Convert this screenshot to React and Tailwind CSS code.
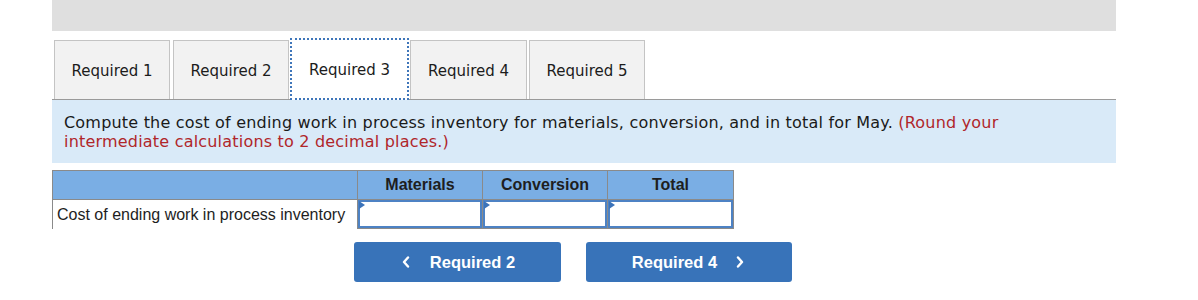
import React from 'react';

const tabs = [
  { label: 'Required 1', cls: 'w-[116px]' },
  { label: 'Required 2', cls: 'w-[116px] ml-[3px]' },
  { label: 'Required 3', cls: 'w-[119px] ml-[1px]', active: true },
  { label: 'Required 4', cls: 'w-[117px] ml-[1px]' },
  { label: 'Required 5', cls: 'w-[116px] ml-[2px]' },
];

function Chevron({ dir = 'left' }) {
  return (
    <svg width="8" height="12" viewBox="0 0 8 12" className="shrink-0">
      <polyline
        points={dir === 'left' ? '6,1.5 2,6 6,10.5' : '2,1.5 6,6 2,10.5'}
        fill="none"
        stroke="white"
        strokeWidth="2.4"
        strokeLinecap="round"
        strokeLinejoin="round"
      />
    </svg>
  );
}

function InputCell() {
  return (
    <td className="p-0 border border-[#8a8a8a] border-t-0">
      <div className="relative h-[28px] border-2 border-[#4d82c4] bg-white">
        <span className="absolute -left-[1px] -top-[1px] w-0 h-0 border-y-[4px] border-y-transparent border-l-[6px] border-l-[#3b73b9]" />
      </div>
    </td>
  );
}

export default function App() {
  return (
    <div className="w-[1198px] h-[300px] bg-white overflow-hidden">
      <div className="ml-[52px] w-[1064px]">
        <div className="h-[31px] bg-[#dfdfdf]" />

        {/* tabs */}
        <div
          className="mt-[9px] flex items-end pl-[2px] border-b border-[#9a9a9a] h-[60px]"
          style={{ fontFamily: '"DejaVu Sans", Verdana, sans-serif' }}
        >
          {tabs.map((t) =>
            t.active ? (
              <div
                key={t.label}
                className={`${t.cls} relative z-10 -mb-[1px] h-[62px] pt-[3px] flex items-center justify-center bg-white border-2 border-dotted border-[#3f76ba] text-[15px] text-[#1c1c1c]`}
              >
                {t.label}
              </div>
            ) : (
              <div
                key={t.label}
                className={`${t.cls} h-[59px] pt-[2px] flex items-center justify-center bg-[#f2f2f2] border border-b-0 border-[#c4c4c4] text-[15px] text-[#1c1c1c]`}
              >
                {t.label}
              </div>
            )
          )}
        </div>

        {/* instructions */}
        <div
          className="h-[63px] bg-[#d9eaf8] px-[12px] pt-[13px] text-[16px] leading-[19px] tracking-[0.2px] text-[#1a1a1a]"
          style={{ fontFamily: '"DejaVu Sans", Verdana, sans-serif' }}
        >
          Compute the cost of ending work in process inventory for materials, conversion, and in total for May.{' '}
          <span className="text-[#b0262a]">
            (Round your
            <br />
            intermediate calculations to 2 decimal places.)
          </span>
        </div>

        {/* table */}
        <table
          className="mt-[7px] border-collapse text-[16px]"
          style={{ fontFamily: '"Liberation Sans", Arial, sans-serif' }}
        >
          <thead>
            <tr className="bg-[#7aaee4] h-[29px]">
              <th className="w-[305px] border border-[#8a8a8a]" />
              <th className="w-[125px] border border-[#8a8a8a] font-bold text-[#1e1e1e]">Materials</th>
              <th className="w-[125px] border border-[#8a8a8a] font-bold text-[#1e1e1e]">Conversion</th>
              <th className="w-[126px] border border-[#8a8a8a] font-bold text-[#1e1e1e]">Total</th>
            </tr>
          </thead>
          <tbody>
            <tr className="h-[29px]">
              <td className="border-l border-[#8a8a8a] pl-[4px] pr-[4px] pt-[1px] text-[#1e1e1e] whitespace-nowrap">
                Cost of ending work in process inventory
              </td>
              <InputCell />
              <InputCell />
              <InputCell />
            </tr>
          </tbody>
        </table>

        {/* navigation */}
        <div
          className="mt-[13px] ml-[302px] flex gap-[25px] text-white text-[16.5px] font-bold"
          style={{ fontFamily: '"Liberation Sans", Arial, sans-serif' }}
        >
          <button className="w-[207px] h-[40px] rounded-[3px] bg-[#3873b9] flex items-center justify-center gap-[20px] pl-[2px]">
            <Chevron dir="left" />
            <span>Required 2</span>
          </button>
          <button className="w-[206px] h-[40px] rounded-[3px] bg-[#3873b9] flex items-center justify-center gap-[19px] pr-[2px]">
            <span>Required 4</span>
            <Chevron dir="right" />
          </button>
        </div>
      </div>
    </div>
  );
}
